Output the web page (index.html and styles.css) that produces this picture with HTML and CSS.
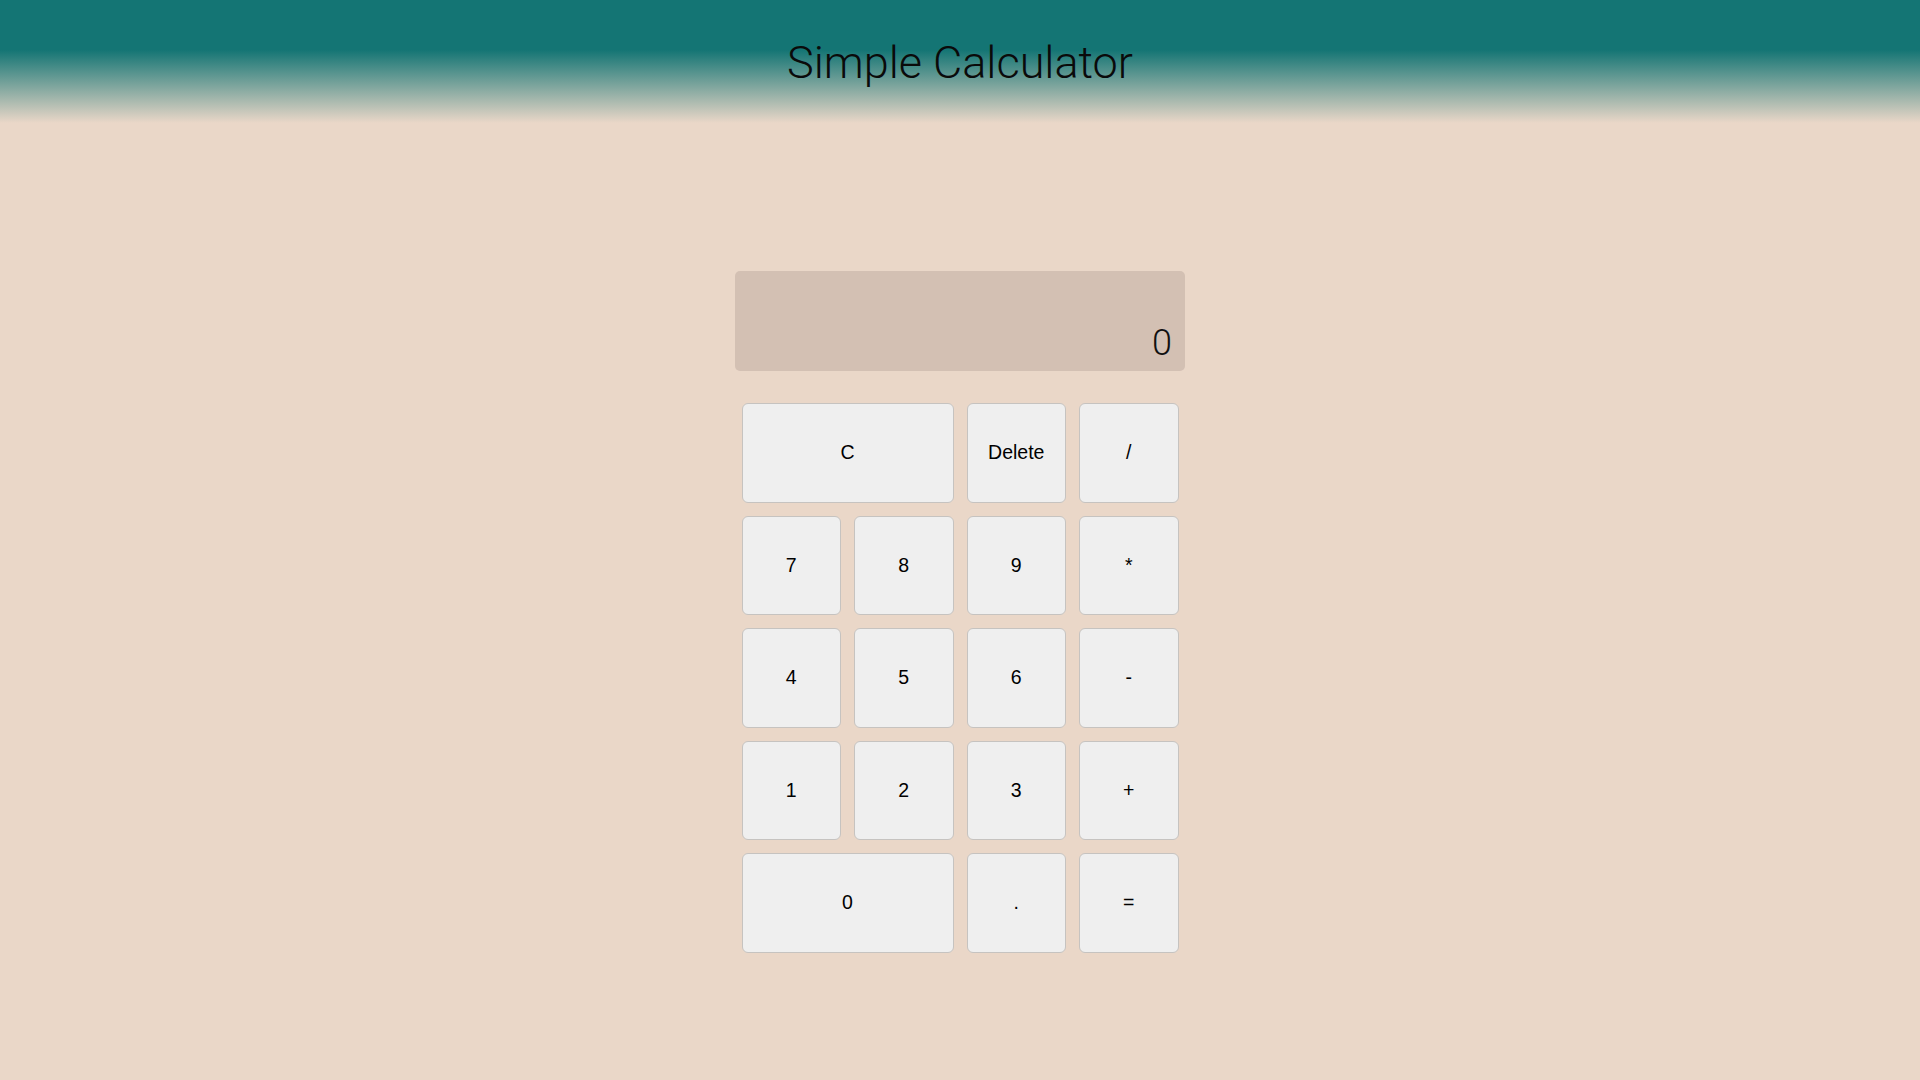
FILE: index.html
```html
<!DOCTYPE html>
<html lang="en">
<head>
<meta charset="utf-8">
<title>Simple Calculator</title>
<link rel="stylesheet" href="styles.css">
</head>
<body>
<header class="header">
  <h1 class="title">Simple Calculator</h1>
</header>
<main class="calculator">
  <div class="display"><span class="display-value">0</span></div>
  <div class="keys">
    <button class="key wide">C</button>
    <button class="key">Delete</button>
    <button class="key">/</button>
    <button class="key">7</button>
    <button class="key">8</button>
    <button class="key">9</button>
    <button class="key">*</button>
    <button class="key">4</button>
    <button class="key">5</button>
    <button class="key">6</button>
    <button class="key">-</button>
    <button class="key">1</button>
    <button class="key">2</button>
    <button class="key">3</button>
    <button class="key">+</button>
    <button class="key wide">0</button>
    <button class="key">.</button>
    <button class="key">=</button>
  </div>
</main>
</body>
</html>
```

FILE: styles.css
```css
html, body {
  margin: 0;
  padding: 0;
}

body {
  background: #ead7c8;
  font-family: "Liberation Sans", Arial, sans-serif;
  min-height: 1080px;
}

.header {
  height: 123px;
  box-sizing: border-box;
  padding-top: 36px;
  background: linear-gradient(to bottom, #147574 0px, #147574 50px, #ead7c8 123px);
  text-align: center;
}

.title {
  margin: 0;
  font-family: Roboto, "Noto Sans", sans-serif;
  font-weight: 300;
  font-size: 45px;
  line-height: normal;
  color: #0a0a0a;
}

.calculator {
  display: flex;
  flex-direction: column;
  align-items: center;
  margin-top: 148px;
}

.display {
  width: 450px;
  height: 100px;
  box-sizing: border-box;
  background: #d3c0b3;
  border-radius: 5px;
  display: flex;
  justify-content: flex-end;
  align-items: flex-end;
  padding: 0 13px 10px 0;
}

.display-value {
  font-family: Roboto, "Noto Sans", sans-serif;
  font-weight: 300;
  font-size: 36px;
  line-height: 1;
  color: #111;
}

.keys {
  margin-top: 32px;
  display: grid;
  grid-template-columns: repeat(4, 99.5px);
  grid-auto-rows: 99.5px;
  gap: 13px;
}

.key {
  margin: 0;
  padding: 0;
  background: #efefef;
  border: 1px solid #c6c3c0;
  border-radius: 6px;
  font-family: "Liberation Sans", Arial, sans-serif;
  font-size: 19.5px;
  color: #000;
}

.key.wide {
  grid-column: span 2;
}
```
